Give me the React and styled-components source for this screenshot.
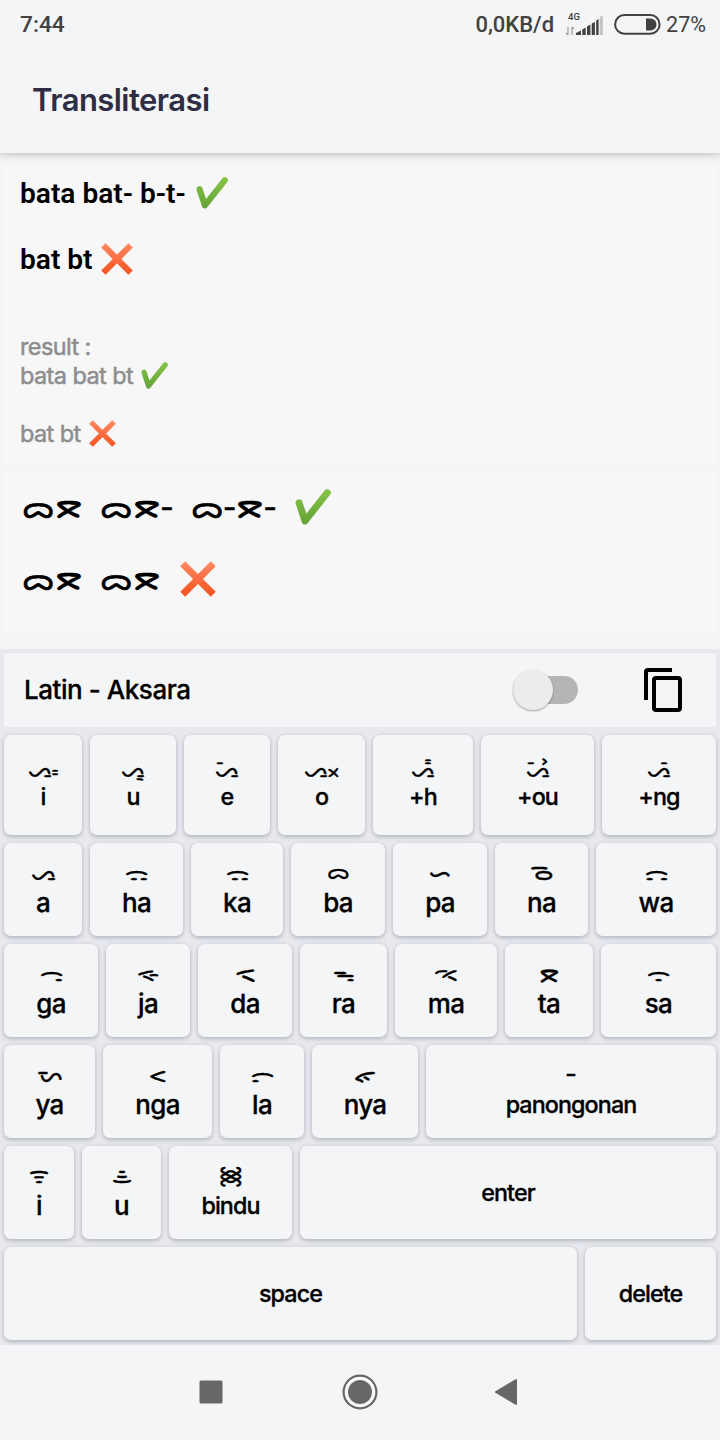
import React from "react";
import styled, { createGlobalStyle } from "styled-components";

const GlobalStyle = createGlobalStyle`
  * { box-sizing: border-box; }
  body { margin: 0; background: #f4f5f7; font-family: Inter, "Noto Sans", sans-serif; color: #000; }
`;

const Screen = styled.div`
  width: 720px;
  height: 1440px;
  display: flex;
  flex-direction: column;
  background: #f4f5f7;
  overflow: hidden;
`;

const StatusBar = styled.div`
  position: relative;
  z-index: 1;
  height: 50px;
  padding: 0 14px 0 20px;
  display: flex;
  align-items: center;
  background: #f4f5f7;
  font-family: Roboto, sans-serif;
  color: #414141;
`;

const StatusText = styled.span`
  font-size: ${(p) => p.$size}px;
  font-weight: ${(p) => p.$weight || 500};
  line-height: 50px;
  white-space: nowrap;
`;

const StatusIcons = styled.div`
  margin-left: auto;
  display: flex;
  align-items: center;
`;

const SignalIcon = styled.svg`
  margin: 0 11px 0 11px;
`;

const BatteryIcon = styled.svg`
  margin: -2px 5px 0 0;
`;

const AppBar = styled.header`
  position: relative;
  height: 103px;
  padding: 0 32px 4px;
  display: flex;
  align-items: center;
  background: #f4f5f7;
  box-shadow: 0 1px 5px rgba(0, 0, 0, 0.12), 0 3px 12px rgba(0, 0, 0, 0.12);
`;

const Title = styled.h1`
  margin: 0;
  font-size: 31px;
  font-weight: 600;
  letter-spacing: -0.55px;
  color: #2f2d43;
`;

const InputPanel = styled.section`
  height: 311px;
  margin: 0 4px;
  padding: 24px 16px 0;
  background: #f7f7f7;
`;

const OutputPanel = styled.section`
  height: 161px;
  margin: 7px 4px 17px;
  padding: 16px 18px 0;
  background: #f7f7f7;
  font-size: 29px;
  line-height: 36px;
`;

const SourceText = styled.div`
  font-family: Roboto, sans-serif;
  font-size: 28.1px;
  font-weight: 600;
  line-height: 33px;
`;

const HintText = styled.div`
  margin-top: 56px;
  font-size: 23.5px;
  font-weight: 400;
  letter-spacing: -0.6px;
  line-height: 29px;
  color: #8d8d8d;
  -webkit-text-stroke: 0.5px #8d8d8d;
`;

const Line = styled.div`
  white-space: pre;
  height: 1lh;
  margin-top: ${(p) => (p.$spaced ? "1lh" : "0")};
`;

const AksaraLine = styled(Line)`
  word-spacing: 9px;
  -webkit-text-stroke: 0.7px #000;
`;

const Ba = styled.span`
  font-size: 30px;
  letter-spacing: 1px;
`;

const Ta = styled.span`
  font-size: 35px;
`;

const Dash = styled.span`
  margin-left: -0.8px;
`;

const Mark = styled.svg`
  width: ${(p) => p.$size}px;
  height: ${(p) => p.$size}px;
  vertical-align: ${(p) => -Math.round(p.$size * 0.2)}px;
  margin-left: ${(p) => p.$gap}px;
`;

const Keyboard = styled.div`
  height: 696px;
  padding: 4px 4px 0;
  background: #e8e9ee;
  display: flex;
  flex-direction: column;
  gap: 8px;
`;

const Toolbar = styled.div`
  height: 74px;
  padding: 0 34px 0 20px;
  display: flex;
  align-items: center;
  background: #f4f5f7;
`;

const ModeLabel = styled.span`
  flex: 1;
  padding-bottom: 2px;
  font-size: 26px;
  font-weight: 500;
  letter-spacing: -0.45px;
  -webkit-text-stroke: 0.3px #000;
`;

const Toggle = styled.button`
  width: 65px;
  height: 28px;
  margin-right: 66px;
  padding: 0;
  border: 0;
  border-radius: 14px;
  display: flex;
  align-items: center;
  background: #b4b5b7;
`;

const Thumb = styled.span`
  flex: none;
  width: 40px;
  height: 40px;
  border-radius: 50%;
  background: #ececec;
  box-shadow: 0 1px 2px rgba(0, 0, 0, 0.35);
`;

const Row = styled.div`
  height: ${(p) => p.$height || 93}px;
  display: flex;
  gap: 8px;
`;

const KeyCap = styled.button`
  flex: ${(p) => p.$width} 0 0;
  min-width: 0;
  padding: ${(p) => (p.$plain ? "0" : p.$tall ? "22px 0 0" : "14px 0 0")};
  border: 0;
  border-radius: 7px;
  display: flex;
  flex-direction: column;
  align-items: center;
  justify-content: ${(p) => (p.$plain ? "center" : "flex-start")};
  background: #f4f5f7;
  box-shadow: 0 2px 4px rgba(40, 44, 66, 0.24), 0 0 5px rgba(40, 44, 66, 0.07);
  font-family: inherit;
  color: #000;
`;

const Aksara = styled.span`
  font-size: ${(p) => p.$size || (p.$tall ? 20.5 : 22)}px;
  line-height: ${(p) => (p.$tall ? 26 : 30)}px;
  -webkit-text-stroke: 0.4px #000;
`;

const Latin = styled.span`
  font-size: ${(p) => (p.$small ? 23.3 : 26)}px;
  font-weight: 500;
  letter-spacing: ${(p) => (p.$small ? -0.9 : -0.7)}px;
  line-height: ${(p) => (p.$tall ? 28 : p.$small ? 32 : 31)}px;
  -webkit-text-stroke: 0.3px #000;
`;

const NavBar = styled.nav`
  flex: 1;
  display: flex;
  justify-content: center;
  align-items: center;
  padding: 0 1px 1px 0;
`;

const NavIcon = styled.svg`
  width: 36px;
  height: 36px;
  margin: 0 56px;
`;

const Check = ({ size, gap = 0 }) => (
  <Mark $size={size} $gap={gap} viewBox="0 0 32 32">
    <defs>
      <linearGradient id="leaf" gradientUnits="userSpaceOnUse" x1="0" y1="0" x2="0" y2="32">
        <stop offset="0" stopColor="#87c548" />
        <stop offset="1" stopColor="#64a136" />
      </linearGradient>
    </defs>
    <path d="M3.600 12.200 8.900 28.400 28.700 3.300" fill="none" stroke="url(#leaf)" strokeWidth="6.200" strokeLinecap="round" strokeLinejoin="round" />
  </Mark>
);

const Cross = ({ size, gap = 0 }) => (
  <Mark $size={size} $gap={gap} viewBox="0 0 32 32">
    <defs>
      <linearGradient id="coral" gradientUnits="userSpaceOnUse" x1="0" y1="0" x2="0" y2="32">
        <stop offset="0" stopColor="#ff8a65" />
        <stop offset="1" stopColor="#f4511e" />
      </linearGradient>
    </defs>
    <path d="M2.400 2.400 29.600 29.600M29.600 2.400 2.400 29.600" fill="none" stroke="url(#coral)" strokeWidth="6.200" />
  </Mark>
);

const rows = [
  [["ᯁᯫ", "i", 78], ["ᯁᯮ", "u", 86], ["ᯁᯩ", "e", 86], ["ᯁᯬ", "o", 87], ["ᯁᯱ", "+h", 100], ["ᯁᯩᯨ", "+ou", 113], ["ᯁᯰ", "+ng", 114]],
  [["ᯁ", "a", 78], ["ᯃ", "ha", 93], ["ᯃ", "ka", 92], ["ᯅ", "ba", 94, 21], ["ᯈ", "pa", 94, 23], ["ᯉ", "na", 93, 23.5], ["ᯌ", "wa", 120, 21.5]],
  [["ᯏ", "ga", 94, 21.5], ["ᯐ", "ja", 84], ["ᯑ", "da", 94, 26], ["ᯓ", "ra", 87], ["ᯕ", "ma", 102], ["ᯖ", "ta", 88, 25.5], ["ᯙ", "sa", 115]],
  [["ᯜ", "ya", 91, 24], ["ᯝ", "nga", 109, 23], ["ᯟ", "la", 84], ["ᯠ", "nya", 106, 24], ["-", "panongonan", 290, 26]],
  [["ᯤ", "i", 70], ["ᯥ", "u", 79], ["᯼", "bindu", 123, 24], [null, "enter", 416]],
  [[null, "space", 573], [null, "delete", 131]],
];

const Key = ({ aksara, latin, width, tall, size }) => (
  <KeyCap $width={width} $tall={tall} $plain={!aksara}>
    {aksara && <Aksara $tall={tall} $size={size}>{aksara}</Aksara>}
    <Latin $tall={tall} $small={tall || latin.length > 3}>{latin}</Latin>
  </KeyCap>
);

export default function App() {
  return (
    <Screen>
      <GlobalStyle />
      <StatusBar>
        <StatusText $size={22.7}>7:44</StatusText>
        <StatusIcons>
          <StatusText $size={22}>0,0KB/d</StatusText>
          <SignalIcon width="38" height="24" viewBox="0 0 38 24">
            <text x="3" y="7" fontFamily="Roboto, sans-serif" fontSize="9.5" fontWeight="500" fill="#414141">4G</text>
            <path d="M3 14v8M1 20l2 2M7 22v-8M7 14l2 2" stroke="#9a9b9d" strokeWidth="1.2" fill="none" />
            <path d="M11 22v-2l5-2.500v4.500zM17.300 16.500l3.400-2v7.500h-3.400zM22 13.500l3.400-2v10.500h-3.400zM26.700 10.500l3.200-1.500v13h-3.200zM31.200 7.500l2.400-1.500v16h-2.400z" fill="#414141" />
            <path d="M34.800 4l3-1.500v19.500h-3z" fill="#c2c3c5" />
          </SignalIcon>
          <BatteryIcon width="47" height="21" viewBox="0 0 47 21">
            <rect x="1.100" y="1.100" width="44.500" height="18.600" rx="9.300" fill="none" stroke="#414141" strokeWidth="2" />
            <path d="M32 4.500h4.500a6 6 0 0 1 0 12H32z" fill="#414141" />
          </BatteryIcon>
          <StatusText $size={21.5} $weight={400}>27%</StatusText>
        </StatusIcons>
      </StatusBar>
      <AppBar><Title>Transliterasi</Title></AppBar>
      <InputPanel>
        <SourceText>
          <Line>bata bat- b-t- <Check size={32} gap={3} /></Line>
          <Line $spaced>bat bt <Cross size={32} gap={1} /></Line>
        </SourceText>
        <HintText>
          <Line>result :</Line>
          <Line>bata bat bt <Check size={27} gap={2} /></Line>
          <Line $spaced>bat bt <Cross size={27} gap={2} /></Line>
        </HintText>
      </InputPanel>
      <OutputPanel>
        <AksaraLine><Ba>ᯅ</Ba><Ta>ᯖ</Ta> <Ba>ᯅ</Ba><Ta>ᯖ</Ta><Dash>-</Dash> <Ba>ᯅ</Ba><Dash>-</Dash><Ta>ᯖ</Ta><Dash>-</Dash> <Check size={36} gap={1} /></AksaraLine>
        <AksaraLine $spaced><Ba>ᯅ</Ba><Ta>ᯖ</Ta> <Ba>ᯅ</Ba><Ta>ᯖ</Ta> <Cross size={36} gap={2} /></AksaraLine>
      </OutputPanel>
      <Keyboard>
        <Toolbar>
          <ModeLabel>Latin - Aksara</ModeLabel>
          <Toggle><Thumb /></Toggle>
          <svg width="38" height="44" viewBox="0 0 38 44" fill="none" stroke="#000" strokeWidth="4">
            <path d="M2 32V4q0-2 2-2h24" />
            <rect x="10" y="10" width="26" height="32" rx="2" />
          </svg>
        </Toolbar>
        {rows.map((keys, r) => (
          <Row key={r} $height={r === 0 ? 100 : 93}>
            {keys.map(([aksara, latin, width, size]) => (
              <Key key={latin} aksara={aksara} latin={latin} width={width} size={size} tall={r === 0} />
            ))}
          </Row>
        ))}
      </Keyboard>
      <NavBar>
        <NavIcon viewBox="0 0 36 36"><rect x="5.500" y="6.500" width="23" height="23" rx="1.500" fill="#676767" /></NavIcon>
        <NavIcon viewBox="0 0 36 36">
          <circle cx="18" cy="18" r="16.400" fill="#fafafa" stroke="#676767" strokeWidth="2.200" />
          <circle cx="18" cy="18" r="12" fill="#676767" />
        </NavIcon>
        <NavIcon viewBox="0 0 36 36"><path d="M6 18 26 6v24z" fill="#676767" stroke="#676767" strokeWidth="2" strokeLinejoin="round" /></NavIcon>
      </NavBar>
    </Screen>
  );
}
